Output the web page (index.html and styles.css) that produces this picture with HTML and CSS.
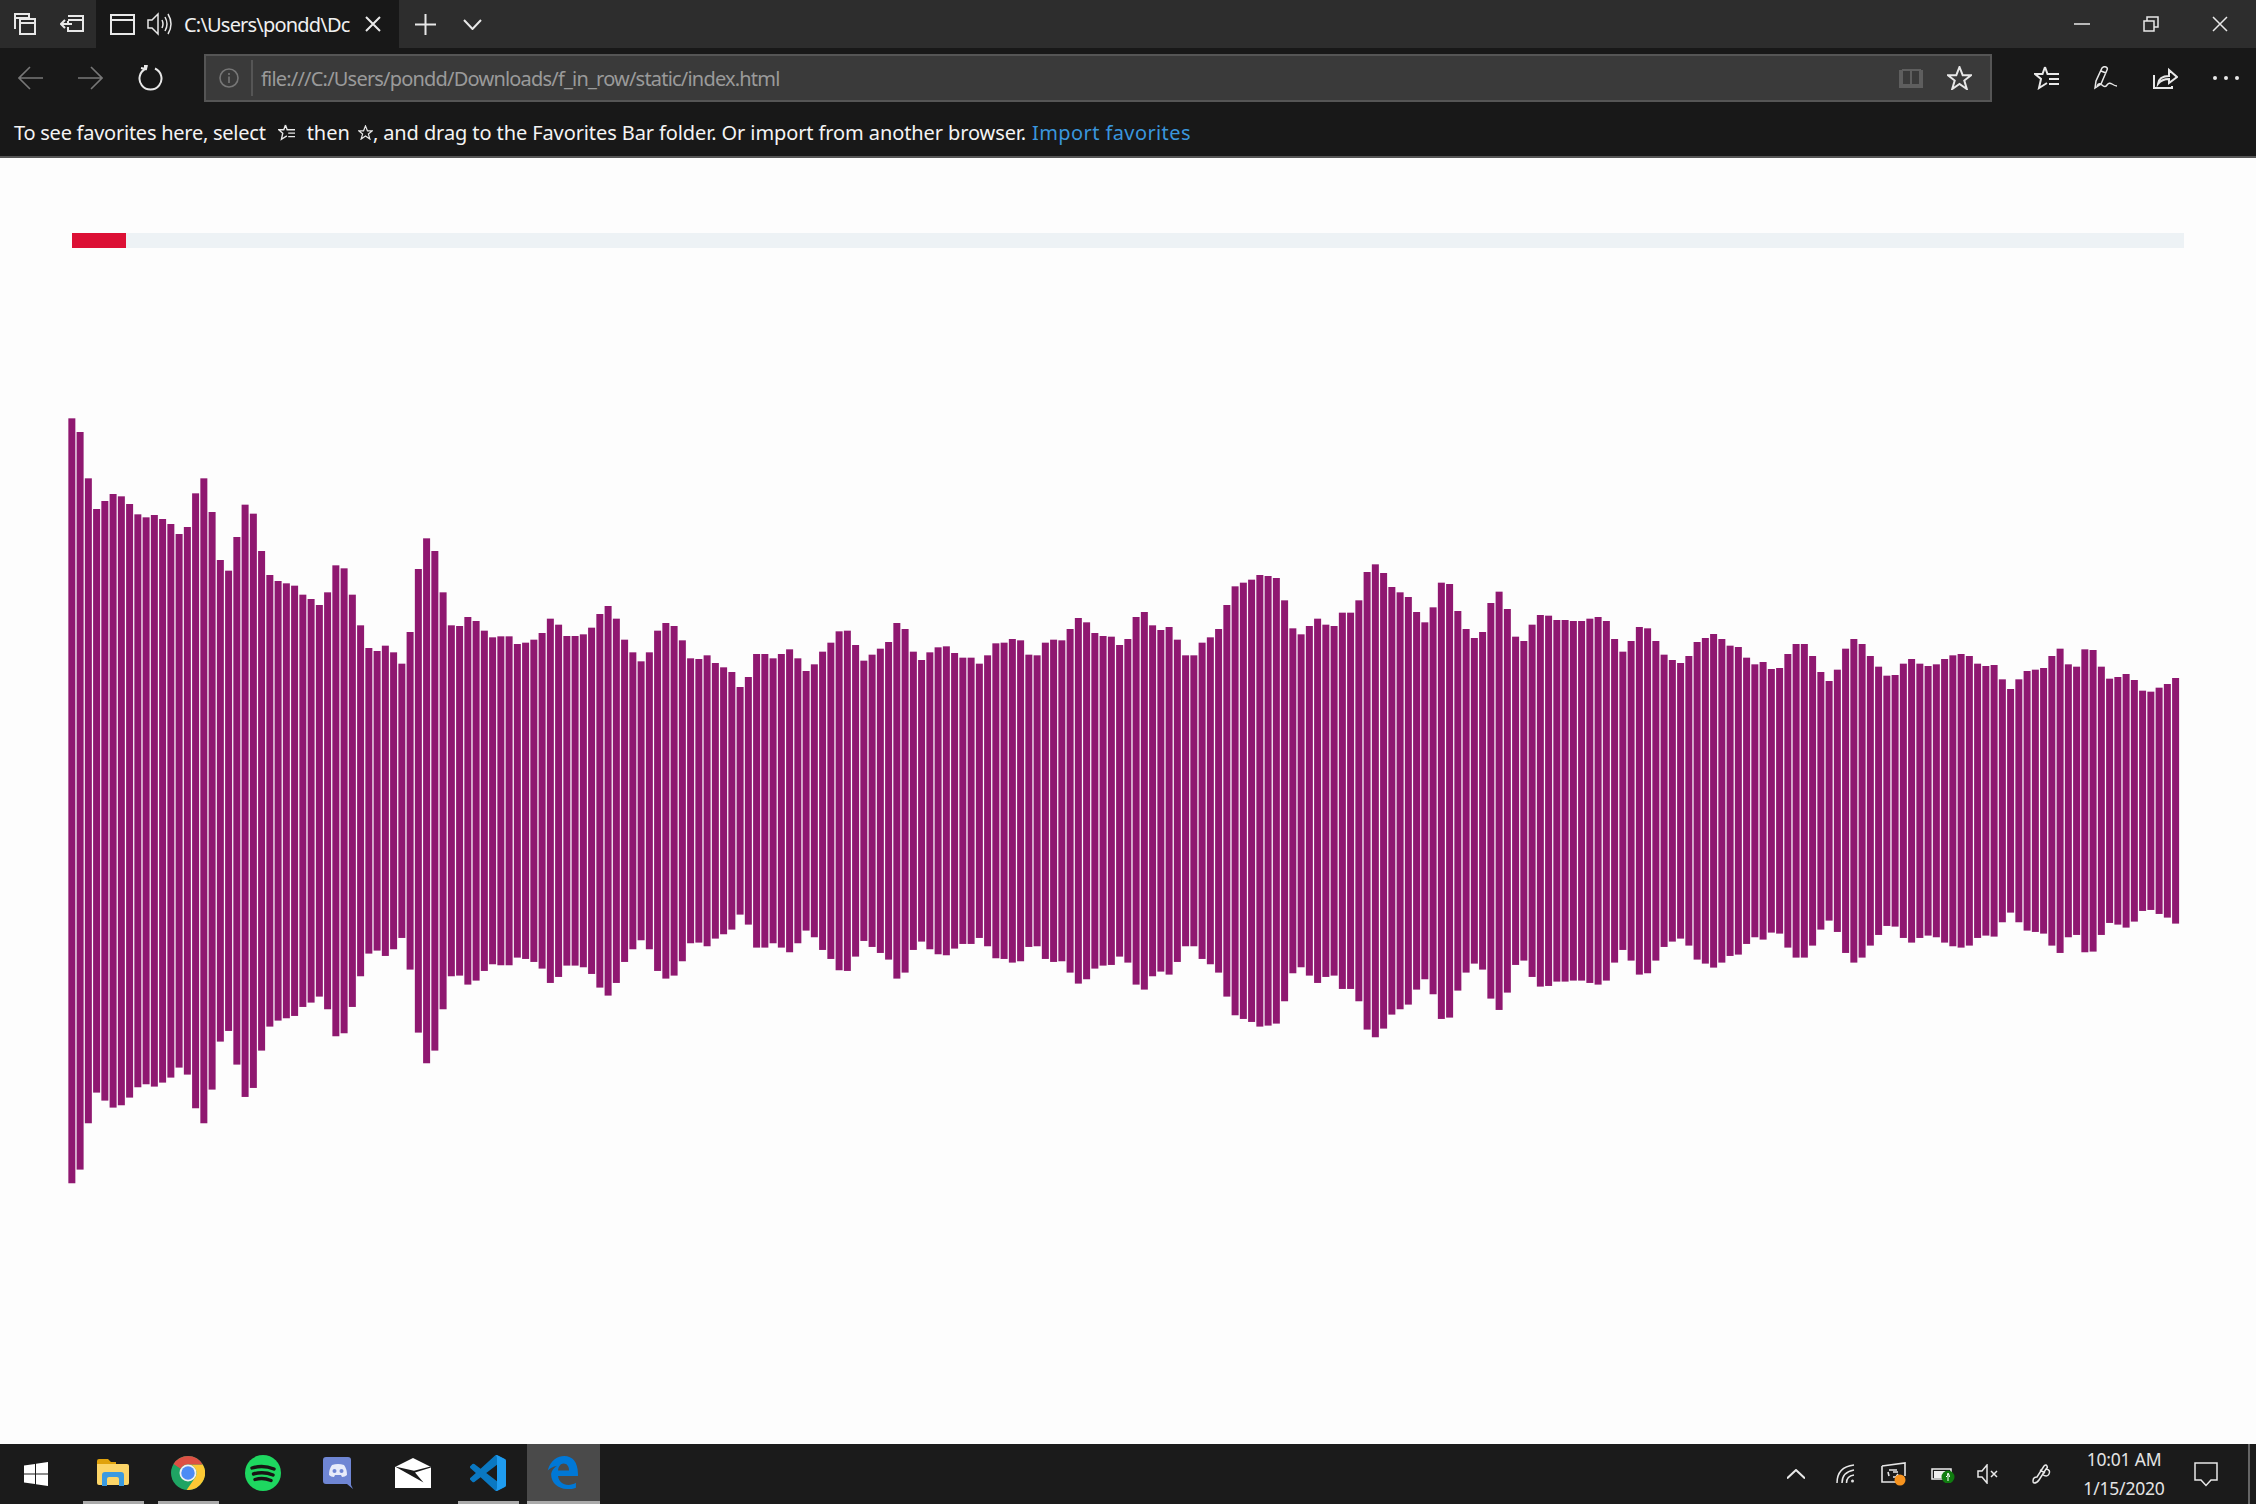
FILE: index.html
```html
<!DOCTYPE html>
<html lang="en">
<head>
<meta charset="utf-8">
<title>C:\Users\pondd\Downloads\f_in_row</title>
<link rel="stylesheet" href="styles.css">
</head>
<body>
<div class="app">
  <header class="titlebar">
    <div class="tab-tools">
      <svg width="23" height="22" viewBox="0 0 23 22" class="ico"><path d="M1 16V1h14v4M1 5h14"/><path d="M6 21V6h15v15zM6 10h15"/></svg>
      <svg width="25" height="22" viewBox="0 0 25 22" class="ico"><path d="M8 3h15v15H8v-4M8 7h15M8 8v2M1 11h11M5 7l-4 4 4 4"/></svg>
    </div>
    <div class="tab">
      <svg width="25" height="21" viewBox="0 0 25 21" class="ico"><path d="M1 1h23v19H1zM1 6h23"/></svg>
      <svg width="25" height="24" viewBox="0 0 25 24" class="ico thin"><path d="M1 8h4l6-6v20l-6-6H1zM15 8q2 4 0 8M18 5q4 7 0 14M21 2q6 10 0 20"/></svg>
      <span class="tab-title">C:\Users\pondd\Dc</span>
      <svg width="16" height="16" viewBox="0 0 16 16" class="ico close-tab"><path d="M1 1l14 14M15 1L1 15"/></svg>
    </div>
    <svg width="21" height="21" viewBox="0 0 21 21" class="ico new-tab"><path d="M10.5 0v21M0 10.5h21"/></svg>
    <svg width="19" height="11" viewBox="0 0 19 11" class="ico tab-menu"><path d="M1 1l8.500 9L18 1"/></svg>
    <div class="window-controls">
      <svg width="16" height="16" viewBox="0 0 16 16" class="ico thin"><path d="M0 8h16"/></svg>
      <svg width="16" height="16" viewBox="0 0 16 16" class="ico thin"><path d="M1 5h10v10H1zM4 5V1h11v10h-4"/></svg>
      <svg width="16" height="16" viewBox="0 0 16 16" class="ico thin"><path d="M1 1l14 14M15 1L1 15"/></svg>
    </div>
  </header>

  <nav class="toolbar">
    <div class="nav-buttons">
      <svg width="25" height="24" viewBox="0 0 25 24" class="ico dim"><path d="M1 12h24M12 1L1 12l11 11"/></svg>
      <svg width="25" height="24" viewBox="0 0 25 24" class="ico dim"><path d="M0 12h24M13 1l11 11-11 11"/></svg>
      <svg width="25" height="26" viewBox="0 0 25 26" class="ico"><path d="M8 3.500a11 11 0 1 0 9 0M7 0v5h0M3 3l5 1 1-4"/></svg>
    </div>
    <div class="urlbar">
      <svg width="20" height="20" viewBox="0 0 20 20" class="ico dim info"><circle cx="10" cy="10" r="9"/><path d="M10 8.500V15M10 5v2"/></svg>
      <span class="url-divider"></span>
      <span class="url-text">file:///C:/Users/pondd/Downloads/f_in_row/static/index.html</span>
      <svg width="24" height="22" viewBox="0 0 24 22" class="ico faint book"><path d="M3 3h9v17H1V4h2v14h9M12 3h9v15h-9M21 4h2v16H12"/></svg>
      <svg width="25" height="24" viewBox="0 0 25 24" class="ico star"><path d="M12.500 1l3.200 8.200h8.300l-6.700 5.300 2.500 8.500-7.300-5-7.300 5 2.500-8.500L1 9.200h8.300z"/></svg>
    </div>
    <div class="browser-actions">
      <svg width="25" height="24" viewBox="0 0 25 24" class="ico"><path d="M11 1l2.500 7H25M11 1L8.500 8H1l6 5-2 9 8-5M15 13h10M15 18h10"/></svg>
      <svg width="24" height="24" viewBox="0 0 24 24" class="ico thin"><path d="M1 22l1-7L8 2q2-2 4-1t1 3L7 18zM7 5l5 2M3 20q2-4 5-1t5 0 5-1 5 2"/></svg>
      <svg width="25" height="22" viewBox="0 0 25 22" class="ico"><path d="M1 8v13h18v-2M1 21M5 17q1-8 11-8V3l8 7-8 6v-4q-7 0-11 5z"/></svg>
      <div class="dots"><span></span><span></span><span></span></div>
    </div>
  </nav>

  <div class="favbar">
    <span class="fav-intro">To see favorites here, select</span>
    <svg width="17" height="17" viewBox="0 0 25 24" class="ico inline-fav"><path d="M11 1l2.500 7H25M11 1L8.500 8H1l6 5-2 9 8-5M15 13h10M15 18h10"/></svg>
    <span>then</span>
    <svg width="15" height="15" viewBox="0 0 25 24" class="ico inline-star"><path d="M12.500 1l3.200 8.200h8.300l-6.700 5.300 2.500 8.500-7.300-5-7.300 5 2.500-8.500L1 9.200h8.300z"/></svg>
    <span class="fav-rest">, and drag to the Favorites Bar folder. Or import from another browser.</span>
    <a class="import-link" href="#">Import favorites</a>
  </div>

  <main class="page">
    <div class="progress"><div class="progress-fill"></div></div>
    <svg id="wave" class="wave" viewBox="0 248 2256 1000" width="2256" height="1000"></svg>
  </main>

  <footer class="taskbar">
    <div class="task-start">
      <svg width="24" height="24" viewBox="0 0 24 24"><path fill="#fff" d="M0 3.500l11-1.500v9.500H0zM12 1.800L24 0v11.500H12zM0 12.500h11V22L0 20.500zM12 12.500h12V24l-12-1.800z"/></svg>
    </div>
    <div class="task-item open">
      <svg width="32" height="27" viewBox="0 0 32 27"><path fill="#e0a20c" d="M0 2q0-2 2-2h9l3 3h5v6H0z"/><path fill="#fcd568" d="M0 5h30q2 0 2 2v17q0 2-2 2H2q-2 0-2-2z"/><path fill="#3a9ae0" d="M5 27V16q0-3 3-3h16q3 0 3 3v11h-5v-7q0-2-2-2h-8q-2 0-2 2v7z"/></svg>
    </div>
    <div class="task-item open">
      <svg width="34" height="34" viewBox="0 0 48 48"><circle cx="24" cy="24" r="24" fill="#1fa463"/><path fill="#fcc934" d="M44.800 12A24 24 0 0 1 22 47.900L34.400 30A12 12 0 0 0 24 12z"/><path fill="#dd5044" d="M3.600 11.400A24 24 0 0 1 44.800 12H24a12 12 0 0 0-10.400 6z"/><circle cx="24" cy="24" r="12" fill="#f1f1f1"/><circle cx="24" cy="24" r="9.500" fill="#4c8bf5"/></svg>
    </div>
    <div class="task-item">
      <svg width="36" height="36" viewBox="0 0 36 36"><circle cx="18" cy="18" r="18" fill="#1ed760"/><path fill="none" stroke="#191414" stroke-width="3.400" stroke-linecap="round" d="M7 13q11-3.500 22 1M8.500 19q10-3 19.500 1M10 24.500q8-2.500 16 1"/></svg>
    </div>
    <div class="task-item">
      <svg width="30" height="32" viewBox="0 0 30 32"><path fill="#6f86d4" d="M3 0h22q3 0 3 3v25l2 4-6-5H3q-3 0-3-3V3q0-3 3-3z"/><path fill="#e8ecfa" d="M6 18q0-6 3-10 3-1 6-1h0q3 0 6 1 3 4 3 10-2 2-5 2l-1-2h-6l-1 2q-3 0-5-2z"/><circle cx="11.500" cy="14" r="2" fill="#6f86d4"/><circle cx="18.500" cy="14" r="2" fill="#6f86d4"/></svg>
    </div>
    <div class="task-item">
      <svg width="36" height="30" viewBox="0 0 36 30"><path fill="#fff" d="M0 9L18 0l18 9v21H0z"/><path fill="#1b1b1b" d="M0 8.500l28.500 16L20 14.500l16-5-.5-1L19 12.800z"/></svg>
    </div>
    <div class="task-item open">
      <svg width="36" height="36" viewBox="0 0 100 100"><path fill="#0a78c2" d="M96.500 10.800L75.900.9a6.200 6.200 0 0 0-7.100 1.200L29.400 38 12.200 25a4.200 4.200 0 0 0-5.300.2l-5.500 5.100a4.200 4.200 0 0 0 0 6.200L16.300 50 1.400 63.500a4.200 4.200 0 0 0 0 6.200l5.500 5a4.200 4.200 0 0 0 5.300.2L29.400 62l39.400 35.900a6.200 6.200 0 0 0 7.100 1.200l20.600-9.900a6.200 6.200 0 0 0 3.500-5.600V16.400a6.200 6.200 0 0 0-3.500-5.600zM75 72.700L45.100 50 75 27.300z"/><path fill="#1f9cf0" d="M71 1a6 6 0 0 1 5-.1l20.500 9.900a6.200 6.200 0 0 1 3.500 5.600v67.200a6.200 6.200 0 0 1-3.500 5.600L76 99.100a6 6 0 0 1-5-.1q4-3 4-7V8q0-4-4-7z"/></svg>
    </div>
    <div class="task-item active">
      <svg width="31" height="33" viewBox="0 0 90 96"><path fill="#0078d7" fill-rule="evenodd" d="M2 42C10 12 32 0 50 0c24 0 40 18 40 52v6H32c2 16 14 26 30 26 8 0 16-2 22-6v14c-8 4-16 4-26 4-26 0-46-18-46-42 0-8 6-20 18-26C16 30 8 36 2 42zM32 42h32c0-12-6-20-16-20-8 0-15 8-16 20z"/></svg>
    </div>
    <div class="tray">
      <svg width="18" height="10" viewBox="0 0 18 10" class="ico tray-chev"><path d="M0 9.500L9 1l9 8.500"/></svg>
      <svg width="20" height="20" viewBox="0 0 20 20" class="ico thin tray-wifi"><path d="M1 19Q1 3 18 1M6 19Q6 8 18 6M10.500 19q0-7 7.500-8"/><circle cx="16.500" cy="17" r="1.500" fill="#ddd" stroke="none"/></svg>
      <svg width="26" height="25" viewBox="0 0 26 25" class="tray-sync"><path fill="none" stroke="#e6e6e6" stroke-width="1.600" d="M1 4l23-3v13M17 20l-16 0V4M8 8h8M8 14l-1-4m5 0h5m-5 5h3l2-3"/><circle cx="19" cy="18" r="5.500" fill="#f7931e"/></svg>
      <svg width="24" height="17" viewBox="0 0 24 17" class="tray-batt"><path fill="none" stroke="#eee" stroke-width="1.500" d="M1 3h19v10H1z"/><path fill="#eee" d="M3 5h13v7H3z"/><circle cx="17" cy="11" r="6.500" fill="#107c10"/><path stroke="#fff" fill="none" d="M17 15V8M15 11q2-1 2-4 2 3 1.500 4"/></svg>
      <svg width="21" height="20" viewBox="0 0 21 20" class="ico thin tray-vol"><path d="M1 7h4l5-6v18l-5-6H1zM14 7l6 6M20 7l-6 6"/></svg>
      <svg width="20" height="20" viewBox="0 0 20 20" class="ico thin tray-pen"><path d="M1 17q0-4 4-4l7-11q2-2 3 0t-1 3L7 16q-2 3-5 3-1 0-1-2zM8 6l5 3M14 5q5 1 3 5t-7 0"/></svg>
      <div class="clock"><span>10:01 AM</span><span>1/15/2020</span></div>
      <svg width="24" height="25" viewBox="0 0 24 25" class="ico thin tray-note"><path d="M1 1h22v17H17l-5 5.500L7 18H1z"/></svg>
      <span class="show-desktop"></span>
    </div>
  </footer>
</div>
<script src="wave.js"></script>
</body>
</html>
```
FILE: styles.css
```css
* { box-sizing: border-box; }
html, body { margin: 0; padding: 0; height: 100%; }
body { background: #fdfdfd; font-family: "Noto Sans", "Open Sans", sans-serif; overflow: hidden; }
.app { width: 2256px; height: 1504px; display: flex; flex-direction: column; overflow: hidden; }

.ico { fill: none; stroke: #e8e8e8; stroke-width: 2; flex: none; display: block; }
.ico.thin { stroke-width: 1.500; }
.ico.dim { stroke: #777; stroke-width: 1.600; }
.ico.faint { stroke: #5e5e5e; }

.titlebar { height: 48px; flex: none; display: flex; align-items: center; background: #2d2d2d; }
.tab-tools { width: 96px; height: 48px; display: flex; align-items: center; gap: 23px; padding-left: 14px; background: #2b2b2b; }
.tab { width: 303px; height: 48px; display: flex; align-items: center; background: #181818; padding-left: 14px; }
.tab > svg:nth-child(2) { margin-left: 12px; }
.tab-title { margin-left: 12px; width: 167px; white-space: nowrap; overflow: hidden; color: #f0f0f0; font-size: 20px; letter-spacing: -0.800px; }
.close-tab { margin-left: 14px; }
.new-tab { margin-left: 16px; }
.tab-menu { margin-left: 27px; }
.window-controls { margin-left: auto; margin-right: 28px; display: flex; gap: 53px; }

.toolbar { height: 56px; flex: none; display: flex; align-items: flex-start; background: #181818; padding-top: 6px; }
.nav-buttons { width: 204px; height: 48px; display: flex; align-items: center; gap: 35px; padding-left: 18px; }
.urlbar { width: 1788px; height: 48px; display: flex; align-items: center; background: #3a3a3a; border: 2px solid #555; }
.info { margin-left: 13px; }
.url-divider { width: 2px; height: 36px; background: #555; margin-left: 12px; }
.url-text { margin-left: 8px; color: #9a9a9a; font-size: 20px; letter-spacing: -0.800px; white-space: nowrap; }
.book { margin-left: auto; }
.star { margin-left: 24px; margin-right: 18px; }
.browser-actions { height: 48px; display: flex; align-items: center; gap: 35px; margin-left: 42px; }
.dots { display: flex; gap: 7px; }
.dots span { width: 4px; height: 4px; border-radius: 50%; background: #e8e8e8; }

.favbar { height: 54px; flex: none; display: flex; align-items: center; padding: 4px 0 0 14px; background: #181818; border-bottom: 2px solid #555; color: #f4f4f4; font-size: 20px; white-space: nowrap; }
.fav-intro { letter-spacing: -0.250px; }
.inline-fav { margin: 0 12px 0 12px; }
.inline-star { margin-left: 8px; }
.fav-rest { letter-spacing: -0.100px; }
.import-link { margin-left: 6px; color: #3a96dd; text-decoration: none; letter-spacing: 0.400px; }

.page { flex: 1; min-height: 0; background: #fdfdfd; padding-top: 75px; overflow: hidden; }
.progress { margin: 0 72px; height: 15px; background: #edf2f5; }
.progress-fill { width: 2.560%; height: 100%; background: #dc1035; }
.wave { display: block; }
.wave rect { fill: #8f1870; }

.taskbar { height: 60px; flex: none; display: flex; align-items: center; background: #1b1b1b; color: #e8e8e8; }
.task-start { width: 75px; height: 60px; display: flex; align-items: center; padding-left: 24px; }
.task-start svg { margin-top: -1px; }
.task-item { width: 75px; height: 60px; flex: none; display: flex; align-items: center; justify-content: center; position: relative; padding-bottom: 3px; }
.task-item.open::after, .task-item.active::after { content: ""; position: absolute; left: 8px; right: 6px; bottom: 0; height: 3px; background: #aaa; }
.task-item.active { background: #4a4a4a; margin-left: 2px; width: 73px; padding-right: 2px; }
.task-item.active::after { left: 0; right: 0; }
.tray { margin-left: auto; height: 60px; display: flex; align-items: center; padding-right: 6px; }
.tray-wifi { margin-left: 31px; }
.tray-sync { margin-left: 25px; }
.tray-batt { margin-left: 24px; }
.tray-vol { margin-left: 22px; }
.tray-pen { margin-left: 34px; }
.clock { width: 100px; margin-left: 22px; padding-bottom: 1px; display: flex; flex-direction: column; align-items: center; gap: 8px; font-size: 17.500px; line-height: 21px; letter-spacing: -0.200px; color: #e4e4e4; }
.tray-note { margin-left: 20px; }
.show-desktop { width: 2px; height: 60px; background: #666; margin-left: 30px; }
```
FILE: wave.js
```js
// Bar tops, read off three overlapping spans of the spectrum (base y + value / 3).
var spans = [
  [400, [55,96,235,327,303,282,289,312,343,352,345,357,372,402,381,280,235,336,480,512,411,314,341,453,525,543,550,557,584,597,615,577,496,505,584,676,744,753,737,757,791,696,507,415,453,577,676,678,651,663,692,712,709,709,732,728,719,699]],
  [540, [236,254,288,288,283,263,222,198,236,299,337,364,337,272,249,258,301,355,357,346,369,382,396,441,411,342,342,355,342,328,355,393,373,335,308,274,272,315,362,344,326,306,249,267,335,360,337,322,319,339,353,353,371,346,310,308,297,301,344,346,308,299,301,267,234,247,279,288,290,315,297,231,216,256,270,261,299,346,346,308,292,267,195,139,128,119,105,108,114,181,265,283,258,236,254,258,218,218,181,96,73,99,141,157,171,216,247,202,128,132,213,267,294,276,189,155,207,290,303,254,225,227,240,240,243,243,236,231,243,297,335,303,261]],
  [590, [115,153,194,210,219,198,156,144,132,147,167,171,203,223,216,237,234,192,162,162,198,246,273,239,176,147,162,198,230,257,255,221,207,221,228,223,207,196,192,198,221,228,225,268,297,268,243,239,234,198,176,223,230,178,180,230,266,261,252,270,302,305,293,282,264]]
];
var svg = document.getElementById("wave");
var centre = 800.8, i = 0;
spans.forEach(function (span) {
  span[1].forEach(function (v) {
    var top = span[0] + v / 3;
    var rect = document.createElementNS("http://www.w3.org/2000/svg", "rect");
    rect.setAttribute("x", (68.35 + i * 8.25).toFixed(2));
    rect.setAttribute("y", top.toFixed(2));
    rect.setAttribute("width", "7");
    rect.setAttribute("height", (2 * (centre - top)).toFixed(2));
    svg.appendChild(rect);
    i++;
  });
});
```
